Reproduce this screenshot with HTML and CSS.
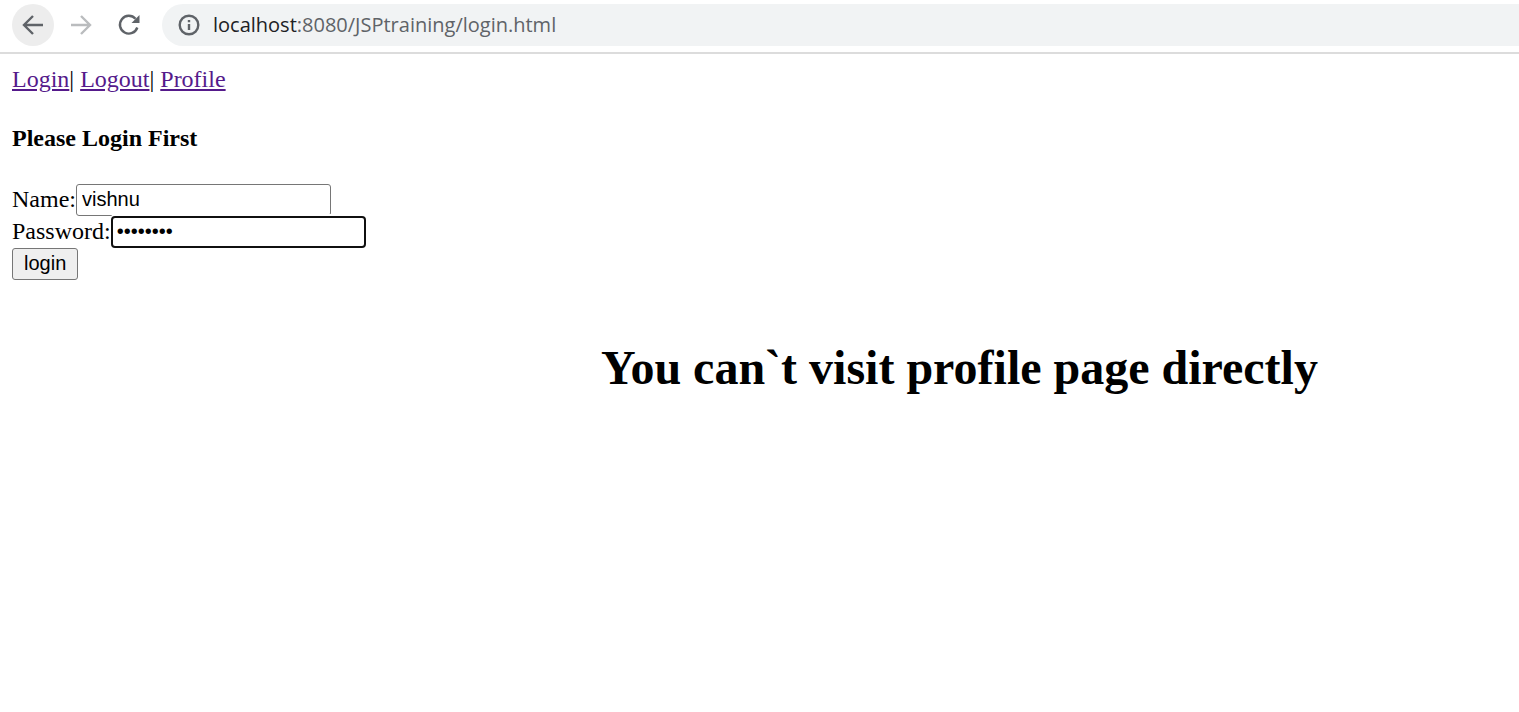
FILE: index.html
```html
<!DOCTYPE html>
<html lang="en">
<head>
<meta charset="utf-8">
<title>Login</title>
<link rel="stylesheet" href="styles.css">
</head>
<body>
<header class="toolbar">
  <button class="tool tool-active" type="button" aria-label="Back">
    <svg width="22" height="22" viewBox="0 0 22 22"><path d="M21 11H3M11 2L2 11L11 20"/></svg>
  </button>
  <button class="tool tool-disabled" type="button" aria-label="Forward">
    <svg width="22" height="22" viewBox="0 0 22 22"><path d="M1 11H19M11 2L20 11L11 20"/></svg>
  </button>
  <button class="tool" type="button" aria-label="Reload">
    <svg width="22" height="22" viewBox="0 0 22 22"><path d="M17.5 4.8A8.9 8.9 0 1 0 19.3 13.5"/><path class="solid" d="M21.5 1V9H13.5Z"/></svg>
  </button>
  <div class="address">
    <svg width="22" height="22" viewBox="0 0 22 22"><circle cx="11" cy="11" r="9.3"/><path d="M11 10V16M11 6V8.3"/></svg>
    <span class="url"><span class="host">localhost</span>:8080/JSPtraining/login.html</span>
  </div>
</header>
<main class="page">
  <nav><a href="#login">Login</a>| <a href="#logout">Logout</a>| <a href="#profile">Profile</a></nav>
  <h4 class="prompt">Please Login First</h4>
  <form>
    <div class="row"><label for="name">Name:</label><input class="field" id="name" type="text" value="vishnu"></div>
    <div class="row"><label for="password">Password:</label><input class="field field-focused" id="password" type="password" value="password"></div>
    <button class="submit" type="submit">login</button>
  </form>
  <h1 class="notice">You can`t visit profile page directly</h1>
</main>
</body>
</html>
```
FILE: styles.css
```css
* { box-sizing: border-box; }
body {
  margin: 0;
  background: #fff;
  color: #000;
  font: 24px/30px "Liberation Serif", "Times New Roman", serif;
}
.toolbar {
  display: flex;
  align-items: center;
  gap: 6px;
  padding: 4px 0 6px 12px;
  border-bottom: 2px solid #dcdcdc;
}
.tool {
  display: flex;
  align-items: center;
  justify-content: center;
  width: 42px;
  height: 42px;
  padding: 0;
  border: 0;
  border-radius: 50%;
  background: none;
}
.tool-active { background: #ededed; }
.toolbar svg { fill: none; stroke: #5f6368; stroke-width: 2.4; }
.toolbar .tool-disabled svg { stroke: #babcbe; }
.toolbar .solid { fill: #5f6368; stroke: none; }
.address {
  display: flex;
  flex: 1;
  align-items: center;
  gap: 13px;
  height: 42px;
  margin-left: 6px;
  padding-left: 16px;
  border-radius: 21px 0 0 21px;
  background: #f1f3f4;
}
.url {
  color: #5f6368;
  font: 20px/42px "Open Sans", "Segoe UI", sans-serif;
}
.host { color: #202124; }
.page { padding: 10px 12px; }
a { color: #551a8b; }
.prompt { margin: 29px 0 31px; font-size: 24px; }
.row { display: flex; }
.field {
  width: 255px;
  height: 32px;
  padding: 1px 5px 3px;
  border: 1px solid #767676;
  border-radius: 3px;
  background: #fff;
  color: #000;
  font: 20px "Liberation Sans", Arial, sans-serif;
}
.field-focused {
  position: relative;
  padding: 0 4px 2px;
  border: 2px solid #101010;
  border-radius: 4px;
  outline: 0;
  box-shadow: 0 -2px 0 #fff;
}
.submit {
  display: block;
  height: 32px;
  padding: 0 11px 2px;
  border: 1px solid #767676;
  border-radius: 3px;
  background: #efefef;
  color: #000;
  font: 20px "Liberation Sans", Arial, sans-serif;
}
.notice {
  margin: 60px 0 0;
  padding-left: 400px;
  font-size: 48px;
  line-height: 56px;
  text-align: center;
}
```
